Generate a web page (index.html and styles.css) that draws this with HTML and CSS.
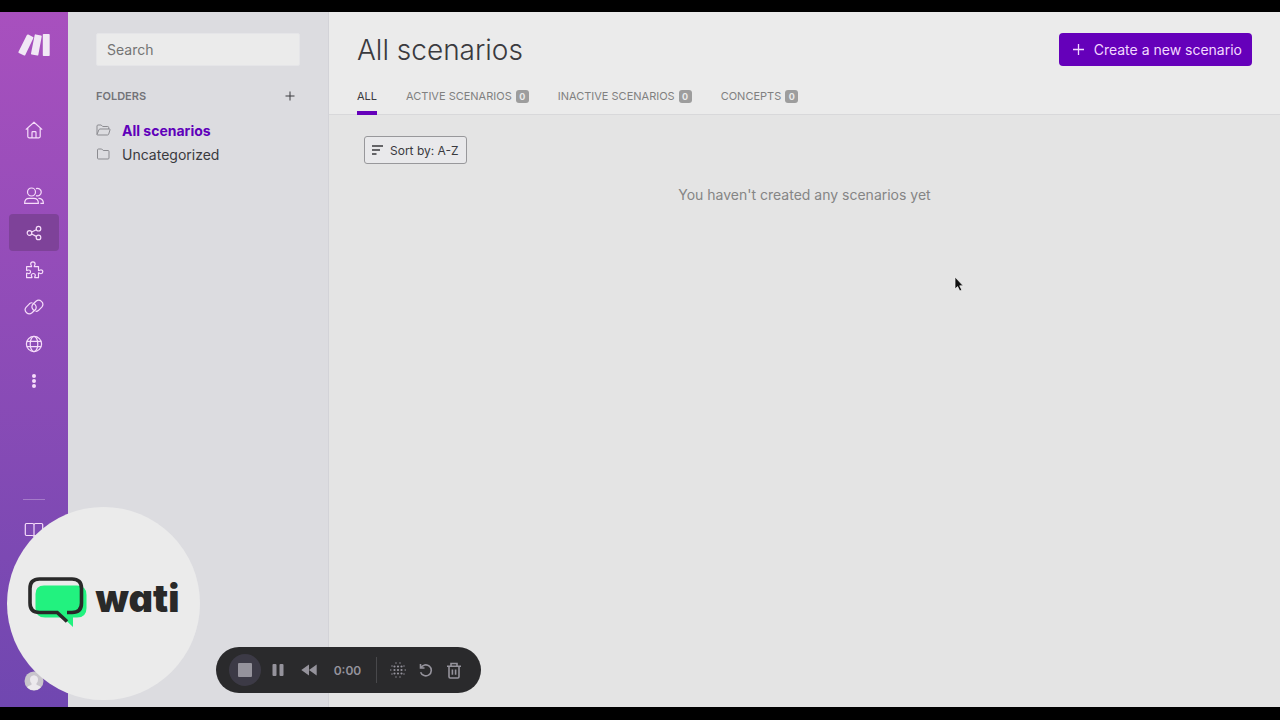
FILE: index.html
```html
<!DOCTYPE html>
<html lang="en">
<head>
    <meta charset="UTF-8">
    <meta name="viewport" content="width=device-width, initial-scale=1.0">
    <title>All scenarios</title>
    <link rel="stylesheet" href="styles.css">
</head>
<body>
    <div class="app">
        <!-- Main navigation -->
        <nav class="sidebar">
            <a class="logo" href="#" aria-label="Home page">
                <svg width="32" height="22" viewBox="0 0 32 22" fill="#f1e8f5">
                    <path d="M10.300 .5 15 2.900Q15.700 3.300 15.400 4L7.300 21Q6.900 21.900 6.100 21.500L.9 18.900Q.1 18.500.5 17.700L8.900 1Q9.400.1 10.300.5Z"/>
                    <path d="M17.800 .4 23 1.400Q23.800 1.600 23.700 2.400L20.300 20.900Q20.100 21.700 19.300 21.500L13.700 20.400Q12.900 20.200 13 19.400L16.700 1.100Q16.900.2 17.800.4Z"/>
                    <rect x="24.800" y="0" width="6.900" height="22" rx="0.8"/>
                </svg>
            </a>
            <a class="nav-item nav-home" href="#" aria-label="Organization">
                <svg class="icon" viewBox="0 0 20 20"><path d="M1.800 9.600 10 2.200l8.200 7.400M3.800 8v8.600q0 1.200 1.200 1.200h10q1.200 0 1.200-1.200V8M8 17.600v-5.100q0-.8.8-.8h2.400q.8 0 .8.8v5.100"/></svg>
            </a>
            <a class="nav-item" href="#" aria-label="Team">
                <svg class="icon" viewBox="0 0 20 20"><circle cx="7.500" cy="6" r="4"/><path d="M.6 17.400q0-5 4.600-5h4.600q4.600 0 4.600 5ZM12 2.600a3.800 3.800 0 1 1 0 7M14.400 12.300q5 0 5 5.100h-3"/></svg>
            </a>
            <a class="nav-item active" href="#" aria-label="Scenarios">
                <svg class="icon" viewBox="0 0 20 20"><circle cx="5.500" cy="10" r="2.300"/><circle cx="14.500" cy="5.700" r="2.300"/><circle cx="14.500" cy="14.400" r="2.300"/><path d="m7.700 9 4.600-2.300M7.700 11l4.600 2.400"/></svg>
            </a>
            <a class="nav-item" href="#" aria-label="Templates">
                <svg class="icon" viewBox="0 0 20 20"><path d="M2.600 6.700h4.900C7.900 6 6.700 5.300 6.700 4a2.200 2.200 0 0 1 4.400 0c0 1.300-1.200 2-.8 2.700h4.200v3.700c.7.500 1.300-.6 2.400-.6a1.900 1.900 0 0 1 0 3.800c-1.100 0-1.700-1-2.400-.6v4.700h-3.700c-.7-.6.500-1.200.5-2.200a2 2 0 0 0-4 0c0 1 1.200 1.600.6 2.200H2.600v-4.500c.6-.5 1.100.4 2.100.4a1.800 1.800 0 0 0 0-3.600c-1 0-1.500.9-2.100.4Z"/></svg>
            </a>
            <a class="nav-item" href="#" aria-label="Connections">
                <svg class="icon" viewBox="0 0 20 20"><path d="M10.800 13.600a4 4 0 0 1-2-6.300l3.200-3a4.100 4.100 0 0 1 6 5.500l-3.400 3.500q-1.400 1.300-3 1M9.300 6.500a4 4 0 0 1 2 6.300l-3.300 3a4.100 4.100 0 0 1-6-5.500l3.400-3.500q1.400-1.300 3-1"/></svg>
            </a>
            <a class="nav-item" href="#" aria-label="Webhooks">
                <svg class="icon" viewBox="0 0 20 20"><circle cx="10" cy="10" r="7.600"/><ellipse cx="10" cy="10" rx="3.800" ry="7.600"/><path d="M2.800 7.300h14.400M2.800 12.700h14.400"/></svg>
            </a>
            <a class="nav-item" href="#" aria-label="More">
                <svg class="icon icon-solid" viewBox="0 0 20 20"><circle cx="10" cy="5" r="2"/><circle cx="10" cy="10" r="2"/><circle cx="10" cy="15" r="2"/></svg>
            </a>

            <div class="sidebar-bottom">
                <a class="nav-item" href="#" aria-label="Resources">
                    <svg class="icon" viewBox="0 0 20 20"><path d="M10 5q0-1.500-1.500-1.500H2.500q-1.200 0-1.200 1.200v9.600q0 1.200 1.200 1.200h5.700q1.800 0 1.800 1.200 0-1.200 1.800-1.200h5.700q1.200 0 1.200-1.200V4.700q0-1.200-1.200-1.200h-6Q10 3.500 10 5v11.600"/></svg>
                </a>
                <a class="nav-item" href="#" aria-label="Profile">
                    <svg width="20" height="20" viewBox="0 0 20 20">
                        <circle cx="10" cy="10" r="9.500" fill="#c9c5cc"/>
                        <path d="M10 4.200a4.200 4.200 0 0 1 4 4.400q0 2.400-1.500 3.700v1.500l3.500 1.500q.6.400.5 1.400a9.500 9.500 0 0 1-13 0q0-1 .6-1.400l3.400-1.500v-1.500Q6 11 6 8.600a4.200 4.200 0 0 1 4-4.400Z" fill="#ece9ed"/>
                    </svg>
                </a>
            </div>
        </nav>

        <!-- Folders -->
        <aside class="folders">
            <input class="search" type="search" placeholder="Search" aria-label="Search">
            <div class="folders-head">
                <h2>FOLDERS</h2>
                <button class="add-folder" type="button" aria-label="Add folder">
                    <svg width="10" height="10" viewBox="0 0 10 10"><path d="M5 .5v9M.5 5h9"/></svg>
                </button>
            </div>
            <ul class="folder-list">
                <li>
                    <a class="folder selected" href="#">
                        <svg width="15" height="14" viewBox="0 0 15 14"><path d="M1 11.500V3q0-1 1-1h3.200l1.500 1.500h5q1 0 1 1V6M1 11.500 2.800 7q.3-1 1.200-1h9.500q.8 0 .5.900l-1.300 4.200q-.3.900-1.200.9H1.600q-.6 0-.6-.5Z"/></svg>
                        All scenarios
                    </a>
                </li>
                <li>
                    <a class="folder" href="#">
                        <svg width="15" height="14" viewBox="0 0 15 14"><path d="M1.500 11V3q0-1 1-1h3.200l1.500 1.500h4.800q1 0 1 1V11q0 1-1 1H2.500q-1 0-1-1Z"/></svg>
                        Uncategorized
                    </a>
                </li>
            </ul>
        </aside>

        <!-- Scenarios -->
        <main class="content">
            <header class="header">
                <div class="title-row">
                    <h1>All scenarios</h1>
                    <button class="btn-create" type="button">
                        <svg width="11" height="11" viewBox="0 0 11 11"><path d="M5.500 0v11M0 5.500h11"/></svg>
                        Create a new scenario
                    </button>
                </div>
                <nav class="tabs">
                    <a class="tab current" href="#">ALL</a>
                    <a class="tab" href="#">ACTIVE SCENARIOS <span class="badge">0</span></a>
                    <a class="tab" href="#">INACTIVE SCENARIOS <span class="badge">0</span></a>
                    <a class="tab" href="#">CONCEPTS <span class="badge">0</span></a>
                </nav>
            </header>
            <div class="list">
                <button class="btn-sort" type="button">
                    <svg width="11" height="10" viewBox="0 0 11 10"><path d="M0 1h11M0 5h8M0 9h4.500"/></svg>
                    Sort by: A-Z
                </button>
                <p class="empty">You haven't created any scenarios yet</p>
            </div>
        </main>
    </div>

    <!-- Camera bubble -->
    <div class="bubble">
        <svg width="60" height="52" viewBox="0 0 60 52">
            <path d="M16 9.500h33q9.500 0 9.500 9.500v13q0 9.500-9.500 9.500H45v9.500L35 41.500H17q-9.500 0-9.500-9.500V18q0-8.500 8.500-8.500Z" fill="#22f27f"/>
            <path d="M39 36.500h5q9.500 0 9.500-9.500V12.500q0-9.500-9.500-9.500H11.500q-9.500 0-9.500 9.500V27q0 9.500 9.500 9.500h17.700L39 45.500" fill="none" stroke="#292929" stroke-width="3.600"/>
        </svg>
        <span class="brand">wati</span>
    </div>

    <!-- Recorder controls -->
    <div class="recorder">
        <button class="rec-btn stop" type="button" aria-label="Stop">
            <svg width="14" height="14" viewBox="0 0 14 14"><rect width="14" height="14" rx="1"/></svg>
        </button>
        <button class="rec-btn" type="button" aria-label="Pause">
            <svg width="12" height="12" viewBox="0 0 12 12"><rect x="0.500" width="4" height="12" rx="1"/><rect x="7.500" width="4" height="12" rx="1"/></svg>
        </button>
        <button class="rec-btn rewind" type="button" aria-label="Rewind">
            <svg width="16" height="12" viewBox="0 0 16 12"><path d="M8 .5v11L.3 6ZM15.700.5v11L8 6Z"/></svg>
        </button>
        <span class="time">0:00</span>
        <span class="separator"></span>
        <button class="rec-btn" type="button" aria-label="Blur">
            <svg width="16" height="16" viewBox="0 0 16 16">
                <path class="dots-small" d="M6 1h0M10 1h0M2 4h0M14 4h0M.8 8h0M15.200 8h0M2 12h0M14 12h0M6 15h0M10 15h0"/>
                <path class="dots" d="M4.500 4.500h0M8 4.500h0M11.500 4.500h0M4.500 8h0M8 8h0M11.500 8h0M4.500 11.500h0M8 11.500h0M11.500 11.500h0"/>
            </svg>
        </button>
        <button class="rec-btn" type="button" aria-label="Restart">
            <svg class="line" width="14" height="14" viewBox="0 0 14 14"><path d="M1.500 1v4h4M1.800 5a5.500 5.500 0 1 1-.2 4.200"/></svg>
        </button>
        <button class="rec-btn" type="button" aria-label="Delete">
            <svg class="line" width="16" height="17" viewBox="0 0 16 17"><path d="M1 4.300h14M5 4V1.500h6V4M3 4.500v10.300q0 1.200 1.200 1.200h7.600q1.200 0 1.200-1.200V4.500M6.400 7.500v5.300M9.600 7.500v5.300"/></svg>
        </button>
    </div>

    <svg class="cursor" width="12" height="17" viewBox="0 0 12 17"><path d="M1 1v12l2.600-2.400L5.800 15l2-1-2.100-4.200h3.500Z" fill="#111" stroke="#f5f5f5" stroke-width="0.700"/></svg>
</body>
</html>
```
FILE: styles.css
```css
* {
    margin: 0;
    padding: 0;
    box-sizing: border-box;
}

body {
    font-family: Inter, "Liberation Sans", sans-serif;
    font-size: 14px;
    background: #000;
    color: #3a3a3e;
    height: 100vh;
    padding: 12px 0 13px;
    overflow: hidden;
}

a {
    color: inherit;
    text-decoration: none;
}

button {
    font-family: inherit;
    border: none;
    background: none;
    cursor: pointer;
}

svg {
    flex-shrink: 0;
}

.app {
    display: flex;
    height: 100%;
}

/* Sidebar */
.sidebar {
    width: 68px;
    flex-shrink: 0;
    display: flex;
    flex-direction: column;
    align-items: center;
    padding: 22px 0 8px;
    background: linear-gradient(#a850be, #7047b0);
}

.logo {
    display: flex;
    height: 22px;
}

.nav-item {
    width: 50px;
    height: 37px;
    flex-shrink: 0;
    display: flex;
    align-items: center;
    justify-content: center;
    border-radius: 4px;
}

.nav-item.active {
    background: #7e4299;
}

.nav-home {
    margin: 55px 0 29px;
}

.icon {
    width: 20px;
    height: 20px;
    fill: none;
    stroke: #f6dcfa;
    stroke-width: 1.2;
    stroke-linejoin: round;
}

.icon-solid {
    fill: #f6dcfa;
    stroke: none;
}

.sidebar-bottom {
    margin-top: auto;
    display: flex;
    flex-direction: column;
    align-items: center;
    gap: 114px;
}

.sidebar-bottom::before {
    content: "";
    width: 22px;
    height: 1px;
    margin-bottom: -103px;
    background: #a57bc9;
}

/* Folders panel */
.folders {
    width: 261px;
    flex-shrink: 0;
    padding: 21px 28px 0;
    background: #dcdce0;
    border-right: 1px solid #d3d3d8;
}

.search {
    width: 100%;
    height: 33px;
    padding: 0 10px;
    border: 1px solid #e5e5e8;
    border-radius: 2px;
    background: #ebebeb;
    font: inherit;
    color: inherit;
    outline: none;
}

.search::placeholder {
    color: #747474;
}

.folders-head {
    display: flex;
    align-items: center;
    justify-content: space-between;
    height: 20px;
    margin-top: 20px;
    padding-right: 5px;
}

.folders-head h2 {
    font-size: 11px;
    font-weight: 600;
    color: #737378;
}

.add-folder {
    display: flex;
}

.add-folder svg {
    stroke: #3a3a3e;
}

.folder-list {
    list-style: none;
    margin-top: 12px;
}

.folder {
    display: flex;
    align-items: center;
    gap: 11px;
    height: 24px;
}

.folder svg {
    fill: none;
    stroke: #8b8b90;
}

.folder.selected {
    font-weight: 700;
    color: #6000ba;
}

/* Content */
.content {
    flex: 1;
    min-width: 0;
    background: #e4e4e4;
}

.header {
    padding: 20px 28px 0;
    background: #ebebeb;
    border-bottom: 1px solid #d8d8da;
}

.title-row {
    display: flex;
    align-items: center;
    justify-content: space-between;
    height: 35px;
}

h1 {
    font-size: 28px;
    font-weight: 300;
}

.btn-create {
    display: flex;
    align-items: center;
    gap: 10px;
    height: 33px;
    padding: 0 10px 0 14px;
    border-radius: 4px;
    background: #6500ba;
    color: #f3d9ff;
    font-size: 14px;
}

.btn-create svg {
    stroke: #f3d9ff;
    stroke-width: 1.3;
}

.tabs {
    display: flex;
    gap: 29px;
    margin-top: 18px;
}

.tab {
    display: flex;
    align-items: center;
    gap: 4px;
    height: 29px;
    padding-bottom: 8px;
    font-size: 11px;
    color: #808080;
}

.tab.current {
    height: 30px;
    margin-bottom: -1px;
    padding-bottom: 5px;
    color: #3a3a3e;
    border-bottom: 4px solid #6500ba;
}

.badge {
    width: 13px;
    height: 13px;
    margin-top: 2px;
    border-radius: 3px;
    background: #9d9d9d;
    color: #ebebeb;
    font-size: 9px;
    font-weight: 700;
    line-height: 13px;
    text-align: center;
}

.list {
    padding: 21px 35px;
}

.btn-sort {
    display: flex;
    align-items: center;
    gap: 7px;
    height: 28px;
    padding: 0 7px;
    border: 1px solid #98989b;
    border-radius: 3px;
    background: #e9e9eb;
    color: #3a3a3e;
    font-size: 12px;
}

.btn-sort svg {
    stroke: #3a3a3e;
    stroke-width: 1.3;
}

.empty {
    margin-top: 21px;
    line-height: 20px;
    text-align: center;
    color: #858585;
}

/* Camera bubble */
.bubble {
    position: absolute;
    left: 7px;
    bottom: 20px;
    width: 193px;
    height: 193px;
    display: flex;
    align-items: center;
    justify-content: center;
    gap: 8px;
    padding-bottom: 4px;
    border-radius: 50%;
    background: #ebebeb;
}

.brand {
    font-size: 38px;
    font-weight: 900;
    line-height: 44px;
    font-feature-settings: "cv11";
    padding-bottom: 8px;
    color: #292929;
}

/* Recorder */
.recorder {
    position: absolute;
    left: 216px;
    bottom: 27px;
    height: 46px;
    display: flex;
    align-items: center;
    padding: 0 13px;
    border-radius: 23px;
    background: #2a2a2c;
    color: #95939c;
}

.rec-btn {
    width: 28px;
    height: 32px;
    display: flex;
    align-items: center;
    justify-content: center;
    border-radius: 50%;
}

.rec-btn svg {
    fill: #95939c;
}

.rec-btn svg.line {
    fill: none;
    stroke: #95939c;
    stroke-width: 1.6;
}

.rec-btn.stop {
    width: 32px;
    margin-right: 3px;
    background: #3c3a46;
}

.rec-btn.rewind {
    width: 34px;
}

.rec-btn .dots,
.rec-btn .dots-small {
    stroke: #95939c;
    stroke-width: 2.2;
    stroke-linecap: round;
}

.rec-btn .dots-small {
    stroke-width: 1.4;
}

.time {
    width: 43px;
    font-size: 12px;
    font-weight: 600;
    text-align: center;
}

.separator {
    width: 1px;
    height: 26px;
    margin: 0 7px;
    background: #48484b;
}

.cursor {
    position: absolute;
    left: 954px;
    top: 276px;
}
```
